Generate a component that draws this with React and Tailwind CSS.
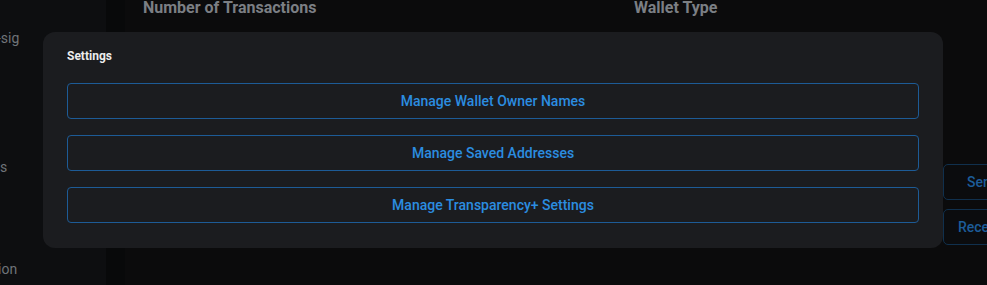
import React from "react";

const actions = [
  "Manage Wallet Owner Names",
  "Manage Saved Addresses",
  "Manage Transparency+ Settings",
];

export default function App() {
  return (
    <div
      className="relative w-[987px] h-[285px] overflow-hidden bg-[#09090a]"
      style={{ fontFamily: "Roboto, 'Liberation Sans', sans-serif" }}
    >
      {/* dimmed page behind the dialog */}
      <div className="flex h-full">
        <aside className="shrink-0 w-[106px] h-full bg-[#0d0e10] text-[14px] text-[#6f7479] relative">
          <div className="absolute left-0 top-[28px] -ml-[3px]">-sig</div>
          <div className="absolute left-0 top-[157px]">s</div>
          <div className="absolute left-0 top-[259px] -ml-[2px]">ion</div>
        </aside>
        <div className="shrink-0 w-[19px] h-full bg-[#08090a]" />
        <main className="flex-1 min-w-0 h-full bg-[#0b0b0c] pl-[18px]">
          <div className="flex -mt-[4px] text-[16px] font-bold text-[#7b7f84] whitespace-nowrap">
            <div className="w-[491px] shrink-0">Number of Transactions</div>
            <div>Wallet Type</div>
          </div>
          <div className="ml-[800px] mt-[144px] flex flex-col gap-[9px]">
            <div className="shrink-0 h-[36px] w-[90px] rounded-[5px] border border-[#10304d] bg-[#0b0c0e] pl-[23px] flex items-center text-[14px] font-medium text-[#1c5c99]">
              Send
            </div>
            <div className="shrink-0 h-[36px] w-[90px] rounded-[5px] border border-[#10304d] bg-[#0b0c0e] pl-[14px] flex items-center text-[14px] font-medium text-[#1c5c99]">
              Receive
            </div>
          </div>
        </main>
      </div>

      {/* dialog */}
      <div className="absolute left-[43px] top-[32px] w-[900px] h-[216px] rounded-[12px] bg-[#1b1c1f] px-[24px] pt-[17px]">
        <h2 className="text-[12px] font-bold text-[#ececec] leading-[15px]">
          Settings
        </h2>
        <div className="mt-[19px] flex flex-col gap-[16px]">
          {actions.map((label) => (
            <button
              key={label}
              className="h-[36px] w-full rounded-[4px] border border-[#1d5b96] text-[14px] font-medium text-[#2b8de0]"
            >
              {label}
            </button>
          ))}
        </div>
      </div>
    </div>
  );
}
